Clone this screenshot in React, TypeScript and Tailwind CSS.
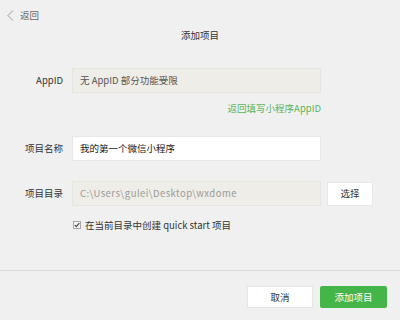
import React from 'react';

const font = { fontFamily: '"Noto Sans CJK SC", "Noto Sans", sans-serif' };

const BackArrow = () => (
  <svg width="7" height="11" viewBox="0 0 7 11" fill="none" className="text-[#9a9a9a]">
    <path d="M6 0.5L1 5.5L6 10.5" stroke="currentColor" strokeWidth="1" />
  </svg>
);

const CheckBox = () => (
  <svg width="8" height="8" viewBox="0 0 8 8" className="shrink-0">
    <rect x="0.5" y="0.5" width="7" height="7" fill="#f4f4f4" stroke="#a8a8a8" />
    <path d="M1.8 4.2L3.3 5.7L6.3 2.2" stroke="#444" strokeWidth="1.2" fill="none" />
  </svg>
);

function Row({ label, children }: { label: string; children: React.ReactNode }) {
  return (
    <div className="flex items-center">
      <div className="w-[63px] text-right text-[9.5px] text-[#333]">{label}</div>
      <div className="ml-[9px] flex items-center">{children}</div>
    </div>
  );
}

export default function App() {
  return (
    <div className="flex h-[320px] w-[400px] flex-col bg-[#f0f0f0]" style={font}>
      <div className="flex h-[30px] items-center gap-[6px] pl-[7px] text-[9.5px] text-[#666]">
        <BackArrow />
        <span>返回</span>
      </div>
      <div className="text-center text-[9.5px] leading-[10px] text-[#333]">添加项目</div>

      <div className="mt-[28px] flex flex-col">
        <Row label="AppID">
          <div className="flex h-[25px] w-[249px] items-center border border-[#e6e5df] bg-[#eeede7] px-[7px] text-[9.5px] text-[#555]">
            无 AppID 部分功能受限
          </div>
        </Row>
        <div className="mt-[9px] w-[321px] text-right text-[9.5px] leading-[12px] text-[#58b55b]">
          返回填写小程序AppID
        </div>

        <div className="mt-[22px]">
          <Row label="项目名称">
            <div className="flex h-[25px] w-[249px] items-center border border-[#e8e8e8] bg-white px-[7px] text-[9.5px] text-[#222]">
              我的第一个微信小程序
            </div>
          </Row>
        </div>

        <div className="mt-[20px]">
          <Row label="项目目录">
            <div className="flex h-[25px] w-[249px] items-center border border-[#e6e5df] bg-[#eeede7] px-[7px] text-[9.5px] tracking-[0.45px] text-[#9a9a9a]">
              C:\Users\gulei\Desktop\wxdome
            </div>
            <button className="ml-[6px] flex h-[24px] w-[46px] items-center justify-center border border-[#e8e8e8] bg-white text-[9.5px] text-[#333]">
              选择
            </button>
          </Row>
        </div>

        <div className="ml-[73px] mt-[12px] flex items-center gap-[4px] text-[9.5px] text-[#333]">
          <CheckBox />
          <span>在当前目录中创建 quick start 项目</span>
        </div>
      </div>

      <div className="mt-[38px] h-px w-full bg-[#dadada]" />

      <div className="mt-[15px] flex justify-end gap-[7px] pr-[13px]">
        <button className="flex h-[22px] w-[66px] items-center justify-center border border-[#e6e6e6] bg-white text-[9.5px] text-[#333]">
          取消
        </button>
        <button className="flex h-[22px] w-[67px] items-center justify-center rounded-[2px] bg-[#44b549] text-[9.5px] text-white">
          添加项目
        </button>
      </div>
    </div>
  );
}
